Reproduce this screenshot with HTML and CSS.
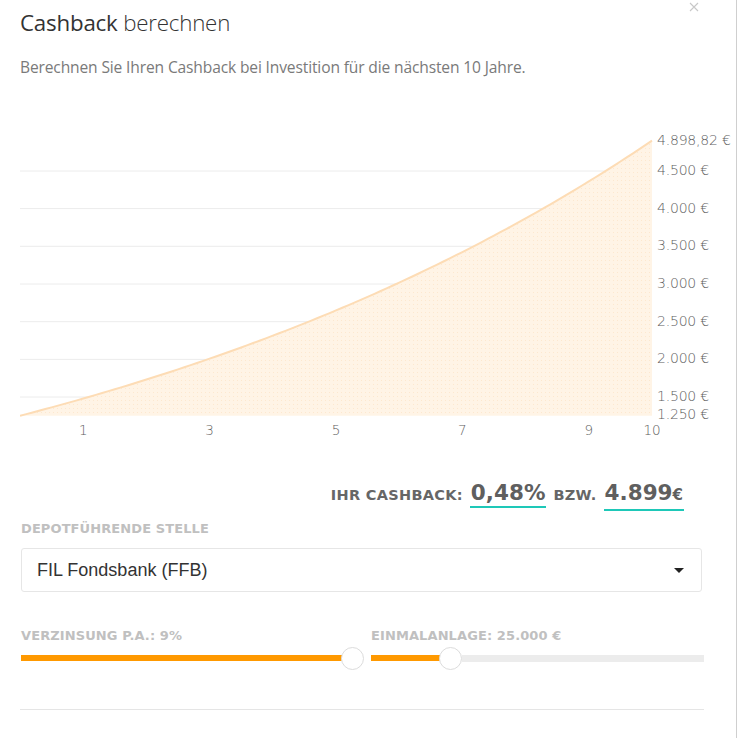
FILE: index.html
```html
<!DOCTYPE html>
<html lang="de">
<head>
<meta charset="utf-8">
<title>Cashback berechnen</title>
<link rel="stylesheet" href="styles.css">
</head>
<body>
<div class="modal">
  <button class="close" aria-label="Schließen">
    <svg width="10" height="10" viewBox="0 0 10 10"><path d="M1 1 L9 9 M9 1 L1 9" stroke="#c8c8c8" stroke-width="1.1" fill="none"/></svg>
  </button>
  <h1 class="title"><span class="strong">Cashback</span> <span class="light">berechnen</span></h1>
  <p class="subtitle">Berechnen Sie Ihren Cashback bei Investition für die nächsten 10 Jahre.</p>

  <svg class="chart" width="718" height="330" viewBox="0 0 718 330">
    <defs>
      <pattern id="dots" width="4" height="4" patternUnits="userSpaceOnUse">
        <rect width="4" height="4" fill="#fff4e6"/>
        <rect x="1" y="1" width="1" height="1" fill="#fde8cf"/>
      </pattern>
    </defs>
    <g class="grid">
      <line x1="0" x2="632" y1="60" y2="60"/>
      <line x1="0" x2="632" y1="97.6" y2="97.6"/>
      <line x1="0" x2="632" y1="135.3" y2="135.3"/>
      <line x1="0" x2="632" y1="173" y2="173"/>
      <line x1="0" x2="632" y1="210.7" y2="210.7"/>
      <line x1="0" x2="632" y1="248.4" y2="248.4"/>
      <line x1="0" x2="632" y1="286" y2="286"/>
    </g>
    <path id="area" fill="url(#dots)" d=""/>
    <path id="curve" fill="none" stroke="#fddcb5" stroke-width="2" d=""/>
    <g class="ylab">
      <text x="637" y="30">4.898,82 €</text>
      <text x="637" y="60">4.500 €</text>
      <text x="637" y="97.6">4.000 €</text>
      <text x="637" y="135.3">3.500 €</text>
      <text x="637" y="173">3.000 €</text>
      <text x="637" y="210.7">2.500 €</text>
      <text x="637" y="248.4">2.000 €</text>
      <text x="637" y="286">1.500 €</text>
      <text x="637" y="304">1.250 €</text>
    </g>
    <g class="xlab">
      <text x="63.2" y="320">1</text>
      <text x="189.6" y="320">3</text>
      <text x="316" y="320">5</text>
      <text x="442.4" y="320">7</text>
      <text x="568.8" y="320">9</text>
      <text x="632" y="320">10</text>
    </g>
  </svg>

  <div class="result">
    <span class="label">IHR CASHBACK:</span>
    <span class="value">0,48%</span>
    <span class="label">BZW.</span>
    <span class="value">4.899<small>€</small></span>
  </div>

  <div class="field">
    <div class="field-label">DEPOTFÜHRENDE STELLE</div>
    <div class="select">
      <span>FIL Fondsbank (FFB)</span>
      <span class="caret"></span>
    </div>
  </div>

  <div class="sliders">
    <div class="slider">
      <div class="field-label">VERZINSUNG P.A.: 9%</div>
      <div class="track">
        <div class="fill" style="width: 321px"></div>
        <div class="thumb"></div>
        <div class="rest"></div>
      </div>
    </div>
    <div class="slider">
      <div class="field-label">EINMALANLAGE: 25.000 €</div>
      <div class="track">
        <div class="fill" style="width: 69px"></div>
        <div class="thumb"></div>
        <div class="rest"></div>
      </div>
    </div>
  </div>

  <hr class="divider">
</div>
<script>
(function () {
  var pts = [];
  var q = 1.1;
  var B = (4898.82 - 1250) / (Math.pow(q, 10) - 1);
  var A = 1250 - B;
  for (var i = 0; i <= 100; i++) {
    var t = i / 10;
    var v = A + B * Math.pow(q, t);
    var x = t * 63.2;
    var y = 304.8 - (v - 1250) / 500 * 37.7;
    pts.push(x.toFixed(2) + ',' + y.toFixed(2));
  }
  var line = 'M' + pts.join(' L');
  document.getElementById('curve').setAttribute('d', line);
  document.getElementById('area').setAttribute('d', line + ' L632,304.8 L0,304.8 Z');
})();
</script>
</body>
</html>
```

FILE: styles.css
```css
* { box-sizing: border-box; }
html, body { margin: 0; padding: 0; background: #fff; }
body { width: 738px; height: 738px; overflow: hidden; }

.modal {
  position: relative;
  width: 737px;
  height: 738px;
  border-right: 1px solid #cfcfcf;
  padding: 0 34px 0 20px;
}

.close {
  position: absolute;
  top: 2px;
  left: 689px;
  border: 0;
  background: none;
  padding: 0;
  width: 10px;
  height: 10px;
  line-height: 0;
}
.close svg { display: block; }

.title {
  margin: 0;
  padding-top: 8px;
  font-family: "Open Sans", sans-serif;
  font-size: 22.3px;
  line-height: 30px;
  color: #333;
  font-weight: 400;
  letter-spacing: -0.2px;
}
.title .light { font-weight: 300; }

.subtitle {
  margin: 19px 0 0;
  font-family: "Open Sans", sans-serif;
  font-size: 15.6px;
  line-height: 20px;
  color: #7a7a7a;
  letter-spacing: -0.15px;
}

.chart {
  display: block;
  margin-top: 34px;
}
.grid line { stroke: #ececec; stroke-width: 1; }
.ylab text {
  font-family: "DejaVu Sans", sans-serif;
  font-size: 14px;
  font-weight: 300;
  fill: #5e5e5e;
  dominant-baseline: middle;
  letter-spacing: -0.2px;
}
.xlab text {
  font-family: "DejaVu Sans", sans-serif;
  font-size: 13.5px;
  font-weight: 300;
  fill: #5e5e5e;
  text-anchor: middle;
  dominant-baseline: middle;
}

.result {
  display: flex;
  justify-content: flex-end;
  align-items: baseline;
  gap: 7px;
  margin-top: 38px;
  padding-right: 18px;
  font-family: "DejaVu Sans", sans-serif;
  font-weight: 700;
  color: #666;
}
.result .label { font-size: 14.5px; letter-spacing: 0.3px; }
.result .value {
  font-size: 21.5px;
  line-height: 27px;
  border-bottom: 2px solid #1ec8b8;
  padding: 0 1px;
  color: #5f5f5f;
}
.result .value small { font-size: 15px; }

.field { margin-top: 10px; }
.field-label {
  font-family: "DejaVu Sans", sans-serif;
  font-weight: 700;
  font-size: 13px;
  color: #c0c0c0;
  letter-spacing: 0.1px;
  line-height: 16px;
  padding-left: 1px;
}
.select {
  margin-top: 11px;
  margin-left: 1px;
  height: 44px;
  border: 1px solid #e6e6e6;
  border-radius: 3px;
  display: flex;
  align-items: center;
  justify-content: space-between;
  padding: 0 17px 0 15px;
  font-family: "Liberation Sans", Arial, sans-serif;
  font-size: 18px;
  color: #333;
}
.caret {
  width: 0; height: 0;
  border-left: 5px solid transparent;
  border-right: 5px solid transparent;
  border-top: 5px solid #222;
}

.sliders {
  display: grid;
  grid-template-columns: 350px 333px;
  margin-top: 36px;
  margin-left: 1px;
}
.slider .field-label { padding-left: 0; }
.track {
  display: flex;
  align-items: center;
  height: 24px;
  margin-top: 2px;
}
.fill { height: 6px; background: #ff9900; flex: none; }
.thumb {
  flex: none;
  width: 23px; height: 23px;
  border-radius: 50%;
  border: 1px solid #dcdcdc;
  background: #fff;
  margin-left: -1px;
}
.rest { flex: 1; height: 7px; background: #ececec; }
.slider:first-child .rest { display: none; }

.divider {
  margin: 39px 0 0;
  width: 684px;
  border: 0;
  border-top: 1px solid #e5e5e5;
}
```
